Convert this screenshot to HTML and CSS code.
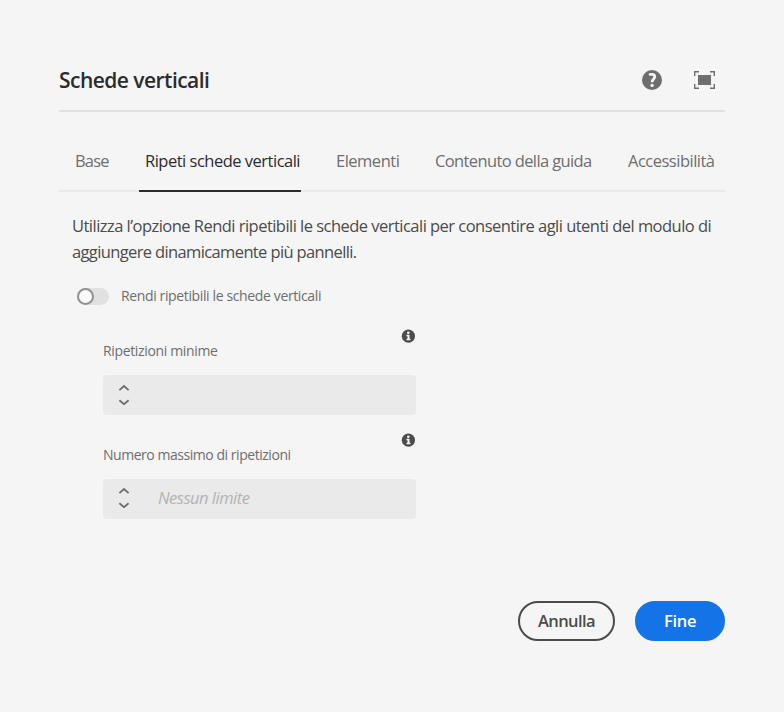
FILE: index.html
```
<!DOCTYPE html>
<html lang="it">
<head>
<meta charset="utf-8">
<title>Schede verticali</title>
<link rel="stylesheet" href="styles.css">
</head>
<body>
<main class="dialog">
  <header class="header">
    <h1 class="title">Schede verticali</h1>
    <svg class="help" width="20" height="20" viewBox="0 0 20 20" aria-hidden="true">
      <circle cx="10" cy="10" r="10" fill="#6e6e6e"/>
      <path d="M7 4.9C8.9 3.9 12.8 3.8 12.8 6.8C12.8 9 10 9 10 12.2" fill="none" stroke="#f5f5f5" stroke-width="2.7"/>
      <circle cx="10.1" cy="15.4" r="1.7" fill="#f5f5f5"/>
    </svg>
    <svg class="expand" width="21" height="18" viewBox="0 0 21 18" aria-hidden="true">
      <path d="M.7 5V.7H5M16 .7h4.3V5M20.3 13v4.3H16M5 17.3H.7V13" fill="none" stroke="#6e6e6e" stroke-width="1.4"/>
      <rect x="4" y="4" width="13" height="10" fill="#6e6e6e"/>
    </svg>
  </header>

  <nav class="tabs">
    <a class="tab tab-base">Base</a>
    <a class="tab tab-repeat selected">Ripeti schede verticali</a>
    <a class="tab tab-items">Elementi</a>
    <a class="tab tab-help">Contenuto della guida</a>
    <a class="tab tab-access">Accessibilità</a>
  </nav>

  <section class="panel">
    <p class="intro">Utilizza l’opzione Rendi ripetibili le schede verticali per consentire agli utenti del modulo di<br><span class="intro-end">aggiungere dinamicamente più pannelli.</span></p>

    <div class="toggle">
      <span class="track"><span class="knob"></span></span>
      <span class="toggle-label">Rendi ripetibili le schede verticali</span>
    </div>

    <div class="fields">
      <div class="field">
        <div class="field-head">
          <label class="label">Ripetizioni minime</label>
          <svg class="info" width="14" height="14" viewBox="0 0 14 14" aria-hidden="true">
            <circle cx="7.4" cy="7.2" r="6.6" fill="#4b4b4b"/>
            <circle cx="7.3" cy="3.8" r="1.3" fill="#f5f5f5"/>
            <path d="M5.5 5.8H8.5V9.7H9.5V11.2H5.5V9.7H6.5V7.2H5.5Z" fill="#f5f5f5"/>
          </svg>
        </div>
        <div class="input">
          <svg class="stepper" width="12" height="20" viewBox="0 0 12 20" aria-hidden="true">
            <path d="M1.4 5.2L6 1L10.6 5.2M1.4 15.3L6 19.2L10.6 15.3" fill="none" stroke="#6e6e6e" stroke-width="1.8"/>
          </svg>
        </div>
      </div>
      <div class="field">
        <div class="field-head">
          <label class="label label-max">Numero massimo di ripetizioni</label>
          <svg class="info" width="14" height="14" viewBox="0 0 14 14" aria-hidden="true">
            <circle cx="7.4" cy="7.2" r="6.6" fill="#4b4b4b"/>
            <circle cx="7.3" cy="3.8" r="1.3" fill="#f5f5f5"/>
            <path d="M5.5 5.8H8.5V9.7H9.5V11.2H5.5V9.7H6.5V7.2H5.5Z" fill="#f5f5f5"/>
          </svg>
        </div>
        <div class="input input-max">
          <svg class="stepper" width="12" height="20" viewBox="0 0 12 20" aria-hidden="true">
            <path d="M1.4 5.2L6 1L10.6 5.2M1.4 15.3L6 19.2L10.6 15.3" fill="none" stroke="#6e6e6e" stroke-width="1.8"/>
          </svg>
          <span class="placeholder">Nessun limite</span>
        </div>
      </div>
    </div>
  </section>

  <footer class="footer">
    <button class="button cancel">Annulla</button>
    <button class="button done">Fine</button>
  </footer>
</main>
</body>
</html>
```
FILE: styles.css
```
* { box-sizing: border-box; }

body {
  margin: 0;
  height: 712px;
  background: #f5f5f5;
  color: #4b4b4b;
  font-family: "Open Sans", "Noto Sans", sans-serif;
  font-size: 16.5px;
}

.dialog {
  width: 666px;
  margin-left: 59px;
  padding-top: 50px;
}

.header {
  display: flex;
  align-items: center;
  height: 62px;
  padding-right: 10px;
  border-bottom: 2px solid #e1e1e1;
}

.title {
  flex: 1;
  margin: 0;
  color: #2c2c2c;
  font-size: 21px;
  line-height: 28px;
  font-weight: 600;
  letter-spacing: -0.53px;
}

.expand { margin-left: 32px; }

.tabs {
  display: flex;
  height: 80px;
  padding: 18px 0 0 16px;
  border-bottom: 2px solid #eaeaea;
  color: #6e6e6e;
}

.tab {
  flex: none;
  height: 62px;
  line-height: 61px;
  white-space: nowrap;
}

.tab-base { width: 64px; letter-spacing: -0.85px; }
.tab-repeat { width: 162px; padding-left: 6px; letter-spacing: -0.5px; }
.tab-items { width: 99px; margin-left: 35px; letter-spacing: -0.5px; }
.tab-help { width: 193px; letter-spacing: -0.62px; }
.tab-access { letter-spacing: -0.5px; }

.selected {
  border-bottom: 2px solid #2c2c2c;
  color: #2c2c2c;
}

.panel { padding: 21px 0 0 13px; }

.intro {
  margin: 0;
  line-height: 26px;
  white-space: nowrap;
  letter-spacing: -0.528px;
}

.intro-end { letter-spacing: -0.63px; }

.toggle {
  display: flex;
  align-items: center;
  height: 20px;
  margin-top: 21px;
  padding-left: 5px;
  color: #6e6e6e;
  font-size: 14px;
}

.track {
  width: 32px;
  height: 17px;
  margin-right: 12px;
  border-radius: 9px;
  background: #e1e1e1;
}

.knob {
  display: block;
  width: 17px;
  height: 17px;
  border: 2px solid #909090;
  border-radius: 50%;
  background: #fafafa;
}

.toggle-label { line-height: 20px; letter-spacing: -0.37px; }

.fields {
  width: 313px;
  margin: 23px 0 0 31px;
}

.field { height: 104px; }

.field-head {
  display: flex;
  justify-content: space-between;
  height: 46px;
}

.label {
  padding-top: 12px;
  color: #6e6e6e;
  font-size: 14px;
  line-height: 20px;
  letter-spacing: -0.35px;
}

.label-max { letter-spacing: -0.46px; }
.info { margin-right: 1px; }

.input {
  display: flex;
  align-items: center;
  height: 40px;
  padding-left: 15px;
  border-radius: 4px;
  background: #eaeaea;
}

.input-max { padding-bottom: 2px; }

.placeholder {
  margin-left: 28px;
  padding-bottom: 2px;
  color: #b3b3b3;
  font-style: italic;
  letter-spacing: -0.5px;
}

.footer {
  display: flex;
  justify-content: flex-end;
  gap: 20px;
  margin-top: 64px;
}

.button {
  height: 40px;
  padding: 0;
  border-radius: 20px;
  font: 600 16.5px/36px "Open Sans", "Noto Sans", sans-serif;
}

.cancel {
  width: 97px;
  border: 2px solid #4b4b4b;
  background: none;
  color: #4b4b4b;
  letter-spacing: -0.6px;
}

.done {
  width: 90px;
  border: 2px solid #1473e6;
  background: #1473e6;
  color: #fff;
  letter-spacing: -0.3px;
}
```
